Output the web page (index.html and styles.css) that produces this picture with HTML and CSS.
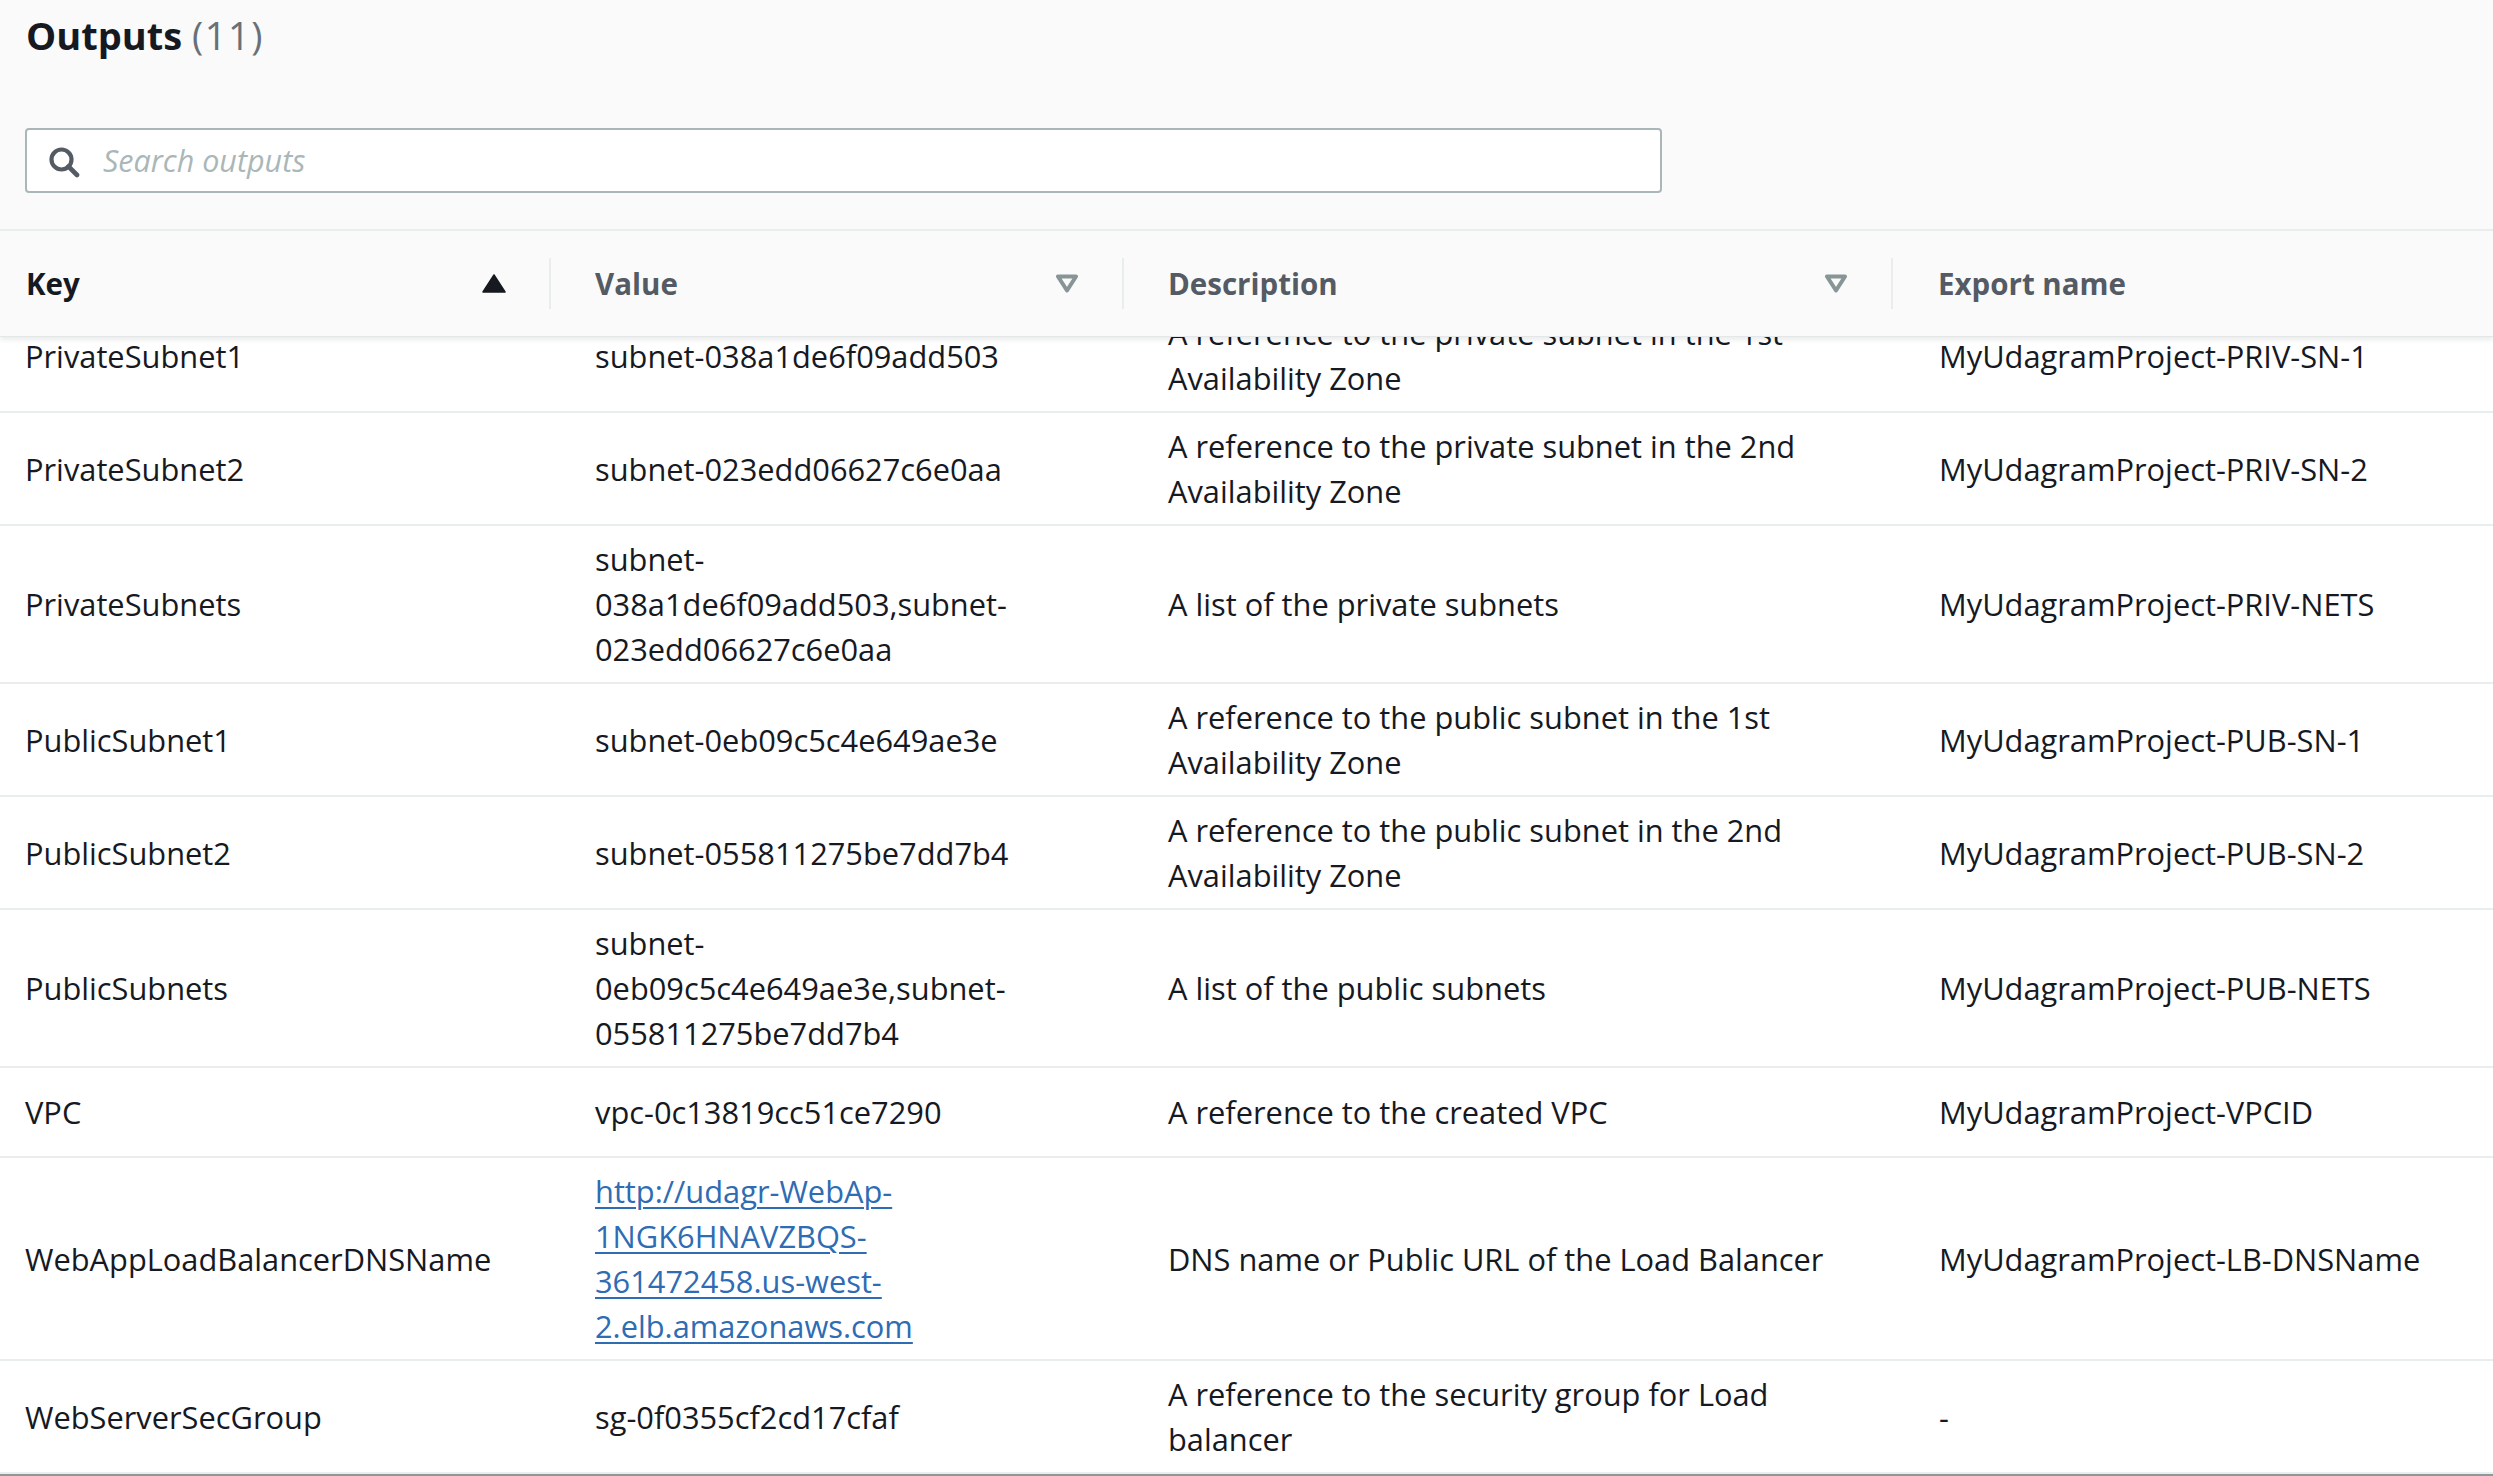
FILE: index.html
```html
<!DOCTYPE html>
<html lang="en">
<head>
<meta charset="utf-8">
<title>Outputs</title>
<link rel="stylesheet" href="styles.css">
</head>
<body>
<div class="page">
  <h2 class="title">Outputs <span class="count">(11)</span></h2>
  <div class="search">
    <svg class="search-icon" viewBox="0 0 32 32" width="32" height="32" aria-hidden="true">
      <circle cx="13.5" cy="13.5" r="10" fill="none" stroke="#545b64" stroke-width="4.2"/>
      <path d="M20.5 20.5 L29 29" stroke="#545b64" stroke-width="4.6" stroke-linecap="round"/>
    </svg>
    <span class="placeholder">Search outputs</span>
  </div>

  <div class="table">
    <div class="thead">
      <div class="th th-sorted">
        <span>Key</span>
        <svg class="sort-icon" viewBox="0 0 24 19" width="24" height="19" aria-hidden="true">
          <path d="M12 1 L23 18 L1 18 Z" fill="#16191f" stroke="#16191f" stroke-width="1.5" stroke-linejoin="round"/>
        </svg>
      </div>
      <div class="th">
        <span>Value</span>
        <svg class="sort-icon" viewBox="0 0 24 19" width="24" height="19" aria-hidden="true">
          <path d="M3 2.5 L21 2.5 L12 16.5 Z" fill="none" stroke="#879596" stroke-width="4" stroke-linejoin="round"/>
        </svg>
      </div>
      <div class="th">
        <span>Description</span>
        <svg class="sort-icon" viewBox="0 0 24 19" width="24" height="19" aria-hidden="true">
          <path d="M3 2.5 L21 2.5 L12 16.5 Z" fill="none" stroke="#879596" stroke-width="4" stroke-linejoin="round"/>
        </svg>
      </div>
      <div class="th th-last">
        <span>Export name</span>
      </div>
    </div>

    <div class="tbody">
      <div class="tr">
        <div class="td">PrivateSubnet1</div>
        <div class="td">subnet-038a1de6f09add503</div>
        <div class="td">A reference to the private subnet in the 1st Availability Zone</div>
        <div class="td td-last">MyUdagramProject-PRIV-SN-1</div>
      </div>
      <div class="tr">
        <div class="td">PrivateSubnet2</div>
        <div class="td">subnet-023edd06627c6e0aa</div>
        <div class="td">A reference to the private subnet in the 2nd Availability Zone</div>
        <div class="td td-last">MyUdagramProject-PRIV-SN-2</div>
      </div>
      <div class="tr">
        <div class="td">PrivateSubnets</div>
        <div class="td">subnet-<br>038a1de6f09add503,subnet-<br>023edd06627c6e0aa</div>
        <div class="td">A list of the private subnets</div>
        <div class="td td-last">MyUdagramProject-PRIV-NETS</div>
      </div>
      <div class="tr">
        <div class="td">PublicSubnet1</div>
        <div class="td">subnet-0eb09c5c4e649ae3e</div>
        <div class="td">A reference to the public subnet in the 1st Availability Zone</div>
        <div class="td td-last">MyUdagramProject-PUB-SN-1</div>
      </div>
      <div class="tr">
        <div class="td">PublicSubnet2</div>
        <div class="td">subnet-055811275be7dd7b4</div>
        <div class="td">A reference to the public subnet in the 2nd Availability Zone</div>
        <div class="td td-last">MyUdagramProject-PUB-SN-2</div>
      </div>
      <div class="tr">
        <div class="td">PublicSubnets</div>
        <div class="td">subnet-<br>0eb09c5c4e649ae3e,subnet-<br>055811275be7dd7b4</div>
        <div class="td">A list of the public subnets</div>
        <div class="td td-last">MyUdagramProject-PUB-NETS</div>
      </div>
      <div class="tr">
        <div class="td">VPC</div>
        <div class="td">vpc-0c13819cc51ce7290</div>
        <div class="td">A reference to the created VPC</div>
        <div class="td td-last">MyUdagramProject-VPCID</div>
      </div>
      <div class="tr">
        <div class="td">WebAppLoadBalancerDNSName</div>
        <div class="td"><a class="link" href="#">http://udagr-WebAp-<br>1NGK6HNAVZBQS-<br>361472458.us-west-<br>2.elb.amazonaws.com</a></div>
        <div class="td">DNS name or Public URL of the Load Balancer</div>
        <div class="td td-last">MyUdagramProject-LB-DNSName</div>
      </div>
      <div class="tr tr-last">
        <div class="td">WebServerSecGroup</div>
        <div class="td">sg-0f0355cf2cd17cfaf</div>
        <div class="td">A reference to the security group for Load balancer</div>
        <div class="td td-last">-</div>
      </div>
    </div>
  </div>
</div>
</body>
</html>
```

FILE: styles.css
```css
html, body {
  margin: 0;
  padding: 0;
}

body {
  background: #fafafa;
  font-family: "Open Sans", "Noto Sans", "Liberation Sans", sans-serif;
  color: #16191f;
  width: 2493px;
  height: 1476px;
  overflow: hidden;
}

.page {
  display: flex;
  flex-direction: column;
}

.title {
  margin: 0;
  padding: 10px 0 0 26px;
  font-size: 38px;
  line-height: 50px;
  font-weight: 700;
  color: #16191f;
}

.count {
  font-weight: 400;
  color: #687078;
  letter-spacing: 1.5px;
}

.search {
  margin: 68px 0 0 25px;
  width: 1637px;
  height: 65px;
  box-sizing: border-box;
  border: 2px solid #aab7b8;
  border-radius: 4px;
  background: #ffffff;
  display: flex;
  align-items: center;
  padding-left: 21px;
  gap: 23px;
}

.search-icon {
  flex: none;
  margin-top: 3px;
}

.placeholder {
  font-style: italic;
  font-size: 30.5px;
  color: #aab7b8;
  line-height: 45px;
}

.table {
  margin-top: 36px;
  display: flex;
  flex-direction: column;
}

.thead {
  position: relative;
  z-index: 2;
  display: grid;
  grid-template-columns: 550px 573px 769px 1fr;
  height: 108px;
  box-sizing: border-box;
  border-top: 2px solid #eaeded;
  border-bottom: 1px solid #e4e7e8;
  background: #fafafa;
  box-shadow: 0 3px 5px rgba(0, 0, 0, 0.08);
}

.th {
  display: flex;
  align-items: center;
  justify-content: space-between;
  padding: 0 44px 0 45px;
  font-size: 29.5px;
  font-weight: 700;
  color: #545b64;
  position: relative;
}

.th:first-child {
  padding-left: 26px;
}

.th-sorted {
  color: #16191f;
}

.th-last {
  padding-left: 46px;
}

.th + .th::before {
  content: "";
  position: absolute;
  left: -1px;
  top: 27px;
  bottom: 27px;
  width: 2px;
  background: #eaeded;
}

.sort-icon {
  flex: none;
}

.tbody {
  position: relative;
  z-index: 1;
  margin-top: -37px;
  display: flex;
  flex-direction: column;
}

.tr {
  display: grid;
  grid-template-columns: 550px 573px 769px 1fr;
  align-items: center;
  min-height: 90px;
  box-sizing: border-box;
  padding: 11px 0 10px;
  background: #ffffff;
  border-bottom: 2px solid #eaeded;
}

.tr-last {
  border-bottom: 2px solid #eaeded;
  box-shadow: 0 2px 0 #8d9899;
}

.td {
  font-size: 30.8px;
  line-height: 45px;
  color: #16191f;
  padding: 0 44px 0 45px;
}

.td:first-child {
  padding-left: 25px;
}

.td-last {
  padding-left: 47px;
}

.link {
  color: #2e6cb3;
  text-decoration: underline;
  text-decoration-thickness: 2px;
  text-underline-offset: 4px;
}
```
